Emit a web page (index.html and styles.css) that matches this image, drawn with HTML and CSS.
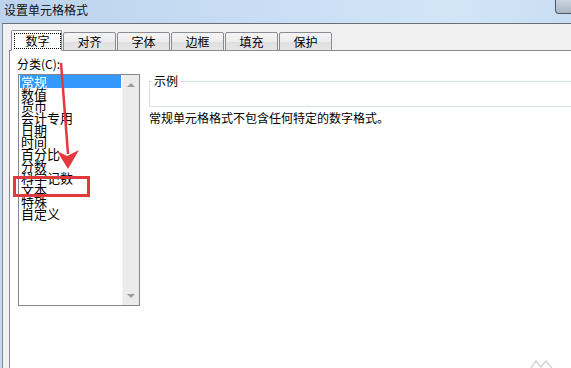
FILE: index.html
```html
<!DOCTYPE html>
<html lang="zh-CN">
<head>
    <meta charset="UTF-8">
    <meta name="viewport" content="width=device-width, initial-scale=1.0">
    <title>设置单元格格式</title>
    <link rel="stylesheet" href="styles.css">
</head>
<body>
    <div class="window">
        <div class="titlebar">
            <span class="title">设置单元格格式</span>
            <span class="close-btn"></span>
        </div>
        <div class="frame">
            <div class="client">
                <div class="tabs">
                    <div class="tab active"><span class="focus">数字</span></div>
                    <div class="tab">对齐</div>
                    <div class="tab">字体</div>
                    <div class="tab">边框</div>
                    <div class="tab">填充</div>
                    <div class="tab">保护</div>
                </div>
                <div class="panel">
                    <div class="category">
                        <label class="field-label">分类(C):</label>
                        <div class="listbox">
                            <ul class="list">
                                <li class="selected">常规</li>
                                <li>数值</li>
                                <li>货币</li>
                                <li>会计专用</li>
                                <li>日期</li>
                                <li>时间</li>
                                <li>百分比</li>
                                <li>分数</li>
                                <li>科学记数</li>
                                <li>文本</li>
                                <li>特殊</li>
                                <li>自定义</li>
                            </ul>
                            <div class="scrollbar">
                                <span class="arrow up"></span>
                                <span class="arrow down"></span>
                            </div>
                        </div>
                    </div>
                    <div class="details">
                        <fieldset class="sample">
                            <legend>示例</legend>
                        </fieldset>
                        <p class="desc">常规单元格格式不包含任何特定的数字格式。</p>
                    </div>
                </div>
            </div>
        </div>

        <!-- red markup drawn over the dialog -->
        <svg class="annotation" width="600" height="368" viewBox="0 0 600 368">
            <line x1="61" y1="63" x2="68" y2="154" stroke="#e3393c" stroke-width="2.5" />
            <polygon points="68,169 57,151 67,156 79,150" fill="#e3393c" />
            <rect x="14.5" y="177.5" width="74" height="18" fill="none" stroke="#e0393e" stroke-width="3" />
        </svg>
        <svg class="watermark" width="24" height="10" viewBox="0 0 24 10">
            <path d="M1 9 L6 2 L11 8 L16 2 L22 9" fill="none" stroke="#d4d4d4" stroke-width="1.5" />
        </svg>
    </div>
</body>
</html>
```

FILE: styles.css
```css
body {
    margin: 0;
    overflow: hidden;
    background-color: #fff;
    font-family: "Noto Sans CJK SC", "Liberation Sans", sans-serif;
    font-size: 12px;
    color: #000;
}

.window {
    position: relative;
    width: 600px;
    height: 368px;
    overflow: hidden;
    display: flex;
    flex-direction: column;
}

.titlebar {
    height: 23px;
    display: flex;
    justify-content: space-between;
    align-items: flex-start;
    padding: 0 2px 0 4px;
    box-sizing: border-box;
    background: linear-gradient(to right, #bcd3ed, #c9def4 45%, #d3e6f8 75%, #c7dcf2);
}

.title {
    line-height: 20px;
    font-size: 12px;
    color: #111;
}

.close-btn {
    width: 43px;
    height: 14px;
    box-sizing: border-box;
    border: 1px solid #4d5664;
    border-top: none;
    border-radius: 0 0 4px 4px;
    background: linear-gradient(#c9d3de, #aab7c6);
}

.frame {
    flex: 1;
    display: flex;
    padding-left: 2px;
    background-color: #c6daf0;
}

.client {
    flex: 1;
    display: flex;
    flex-direction: column;
    border-left: 1px solid #7d8793;
    border-top: 1px solid #67717c;
    background-color: #f0f0f0;
}

.tabs {
    position: relative;
    z-index: 1;
    height: 27px;
    margin-bottom: -1px;
    padding-left: 8px;
    display: flex;
    align-items: flex-end;
    gap: 1px;
}

.tab {
    width: 53px;
    height: 19px;
    box-sizing: border-box;
    border: 1px solid #898c95;
    border-radius: 2px 2px 0 0;
    background: linear-gradient(#f5f5f5, #ececec 50%, #dfdfdf 51%, #e6e6e6);
    text-align: center;
    line-height: 17px;
    font-size: 12px;
}

.tab.active {
    width: 51px;
    height: 21px;
    background: #fff;
    border-bottom-color: #fff;
}

.focus {
    display: block;
    height: 16px;
    margin: 2px 0 0 2px;
    box-sizing: border-box;
    border: 1px dotted #000;
    line-height: 14px;
}

.panel {
    flex: 1;
    margin-left: 6px;
    padding: 6px 0 0 7px;
    display: flex;
    align-items: flex-start;
    background-color: #fff;
    border-left: 1px solid #898c95;
    border-top: 1px solid #898c95;
}

.category {
    width: 123px;
    display: flex;
    flex-direction: column;
}

.field-label {
    line-height: 14px;
    margin-bottom: 3px;
}

.listbox {
    margin-left: 1px;
    width: 122px;
    height: 232px;
    box-sizing: border-box;
    border: 1px solid #828790;
    display: flex;
}

.list {
    flex: 1;
    margin: 0;
    padding: 0 1px;
    list-style: none;
}

.list li {
    height: 12px;
    line-height: 12px;
    padding-left: 1px;
    font-size: 13px;
    white-space: nowrap;
}

.list li.selected {
    height: 13px;
    line-height: 13px;
    background-color: #3399ff;
    color: #fff;
}

.scrollbar {
    width: 17px;
    display: flex;
    flex-direction: column;
    justify-content: space-between;
    align-items: center;
    padding: 8px 0 7px;
    box-sizing: border-box;
    background-color: #ebebeb;
    border-left: 1px solid #f4f4f4;
}

.arrow {
    width: 0;
    height: 0;
    border-left: 4px solid transparent;
    border-right: 4px solid transparent;
}

.arrow.up {
    border-bottom: 4px solid #9c9c9c;
}

.arrow.down {
    border-top: 4px solid #9c9c9c;
}

.details {
    flex: 1;
    margin: 17px 0 0 9px;
}

.sample {
    margin: 0;
    padding: 0;
    height: 33px;
    box-sizing: border-box;
    border: 1px solid #d5dfe5;
    min-width: 0;
}

.sample legend {
    margin-left: 2px;
    padding: 0 2px;
    line-height: 14px;
    font-size: 12px;
}

.desc {
    margin: 4px 0 0;
    line-height: 14px;
    font-size: 12px;
}

.annotation {
    position: absolute;
    left: 0;
    top: 0;
    pointer-events: none;
}

.watermark {
    position: absolute;
    left: 530px;
    top: 359px;
}
```
